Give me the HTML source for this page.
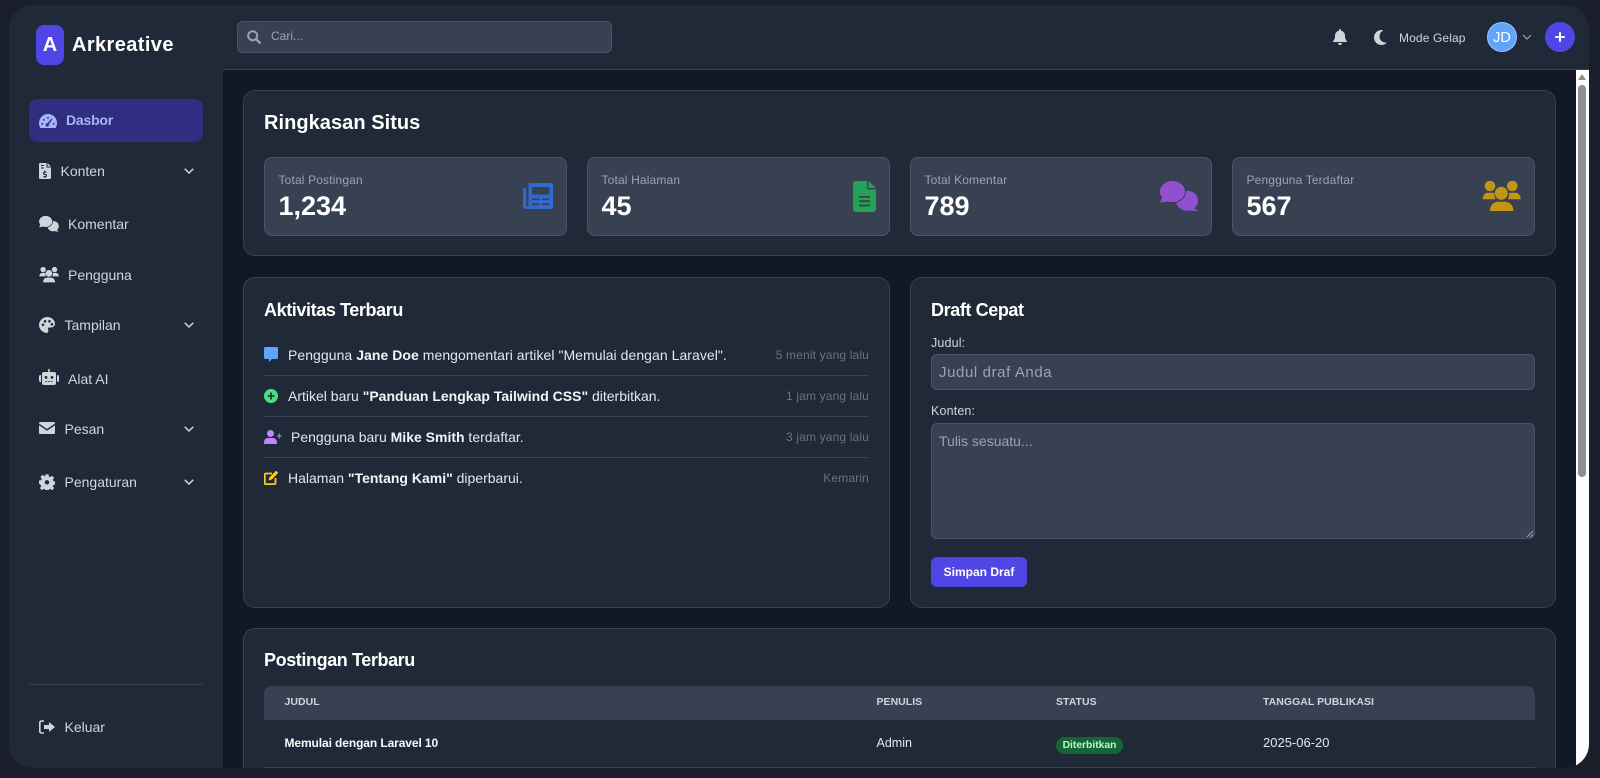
<!DOCTYPE html>
<html lang="id"><head><meta charset="utf-8"><title>Arkreative</title>
<style>
*{box-sizing:border-box;margin:0;padding:0}
html,body{width:1600px;height:778px;overflow:hidden;background:#1a1f2b;font-family:"Liberation Sans",sans-serif}
.a{position:absolute}
.t{position:absolute;white-space:nowrap;line-height:20px;height:20px}
#app{position:absolute;left:9px;top:5px;width:1580px;height:763px;border-radius:24px;overflow:hidden;background:#111827}
#in{position:absolute;left:-9px;top:-5px;width:1600px;height:778px}
.nav{color:#d1d5db;font-size:14px}
.card{position:absolute;background:#1f2937;border:1px solid #374151;border-radius:12px}
.stat{position:absolute;top:157px;height:79px;background:#374151;border:1px solid #4b5563;border-radius:8px}
.lab{color:#9ca3af;font-size:12px;letter-spacing:.15px}
.val{color:#fff;font-size:27px;font-weight:700;line-height:30px;height:30px}
.h2{color:#fff;font-size:18px;font-weight:700;letter-spacing:-.4px}
.act{color:#e5e7eb;font-size:14px}
.act b{color:#f3f4f6}
.time{color:#6b7280;font-size:12px;text-align:right;right:731px;letter-spacing:.15px}
.sep{position:absolute;left:264px;width:605px;height:1px;background:#374151}
.th{color:#d1d5db;font-size:10.5px;font-weight:700;letter-spacing:.03px}
.td{color:#e5e7eb;font-size:12.5px}
.fld{position:absolute;left:931px;width:604px;background:#374151;border:1px solid #4b5563;border-radius:6px}
svg{position:absolute;display:block}
</style></head><body>
<div id="app"><div id="in">
<!-- main -->
<div class="a" style="left:223px;top:69px;width:1353px;height:709px;background:#111827"></div>

<!-- summary -->
<div class="card" style="left:243px;top:90px;width:1313px;height:166px"></div>
<div class="t" style="left:264px;top:113px;color:#fff;font-size:20px;font-weight:700;letter-spacing:.05px">Ringkasan Situs</div>

<div class="stat" style="left:264px;width:303px"></div>
<div class="t lab" style="left:278.500px;top:170px">Total Postingan</div>
<div class="t val" style="left:278.500px;top:191px">1,234</div>
<svg style="left:523px;top:183px" width="30" height="26" viewBox="0 0 30 26"><path fill="#3069cf" fill-rule="evenodd" d="M5.500 0h22.500a2 2 0 0 1 2 2v22a2 2 0 0 1-2 2H3a3 3 0 0 1-3-3V5h3.200v17.500a.8.8 0 0 0 2.300 0zM9 4v7.500h17.500V4zM9 15.500v1.600h7.500v-1.600zM19 15.500v1.600h7.500v-1.600zM9 20.500v1.600h7.500v-1.600zM19 20.500v1.600h7.500v-1.600z"/></svg>

<div class="stat" style="left:587px;width:303px"></div>
<div class="t lab" style="left:601.500px;top:170px">Total Halaman</div>
<div class="t val" style="left:601.500px;top:191px">45</div>
<svg style="left:853px;top:181px" width="23" height="31" viewBox="0 0 23 31"><path fill="#25a255" fill-rule="evenodd" d="M3 0h11v6.500a2 2 0 0 0 2 2h7V28a3 3 0 0 1-3 3H3a3 3 0 0 1-3-3V3a3 3 0 0 1 3-3zM6 15v1.800h11V15zM6 19.300v1.800h11v-1.800zM6 23.600v1.800h11v-1.800z"/><path fill="#25a255" d="M15.500.3 23 7h-7.500z"/></svg>

<div class="stat" style="left:910px;width:302px"></div>
<div class="t lab" style="left:924.500px;top:170px">Total Komentar</div>
<div class="t val" style="left:924.500px;top:191px">789</div>
<svg style="left:1160px;top:181px" width="38" height="31" viewBox="0 0 38 31"><ellipse cx="27" cy="19.700" rx="11" ry="10" fill="#9050d0"/><path fill="#9050d0" d="M33 26l5 4c-3 0-6 0-8-1z"/><ellipse cx="12.500" cy="10.500" rx="13" ry="11" fill="#9050d0" stroke="#3b3850" stroke-width="1"/><ellipse cx="12.500" cy="10.500" rx="12.500" ry="10.500" fill="#9050d0"/><path fill="#9050d0" d="M3 15 0 21.500c3 0 6-.5 8-1.500z"/></svg>

<div class="stat" style="left:1232px;width:303px"></div>
<div class="t lab" style="left:1246.500px;top:170px">Pengguna Terdaftar</div>
<div class="t val" style="left:1246.500px;top:191px">567</div>
<svg style="left:1482px;top:181px" width="39" height="31" viewBox="0 0 39 31" fill="#c29515"><circle cx="8" cy="5" r="5.300"/><circle cx="30.300" cy="5" r="5.300"/><circle cx="19.300" cy="12.300" r="6.500"/><path d="M.7 18.300C.7 14 3 11.700 6 11.700h5c.5 0 1 .1 1.500.3-.5 1.500 0 4 1 6.300zM38.700 18.300C38.700 14 36.400 11.700 33.400 11.700h-5c-.5 0-1 .1-1.500.3.5 1.500 0 4-1 6.300zM8 30v-1c0-5 4-8.300 8-8.300h7c4 0 8.300 3.300 8.300 8.300v1z"/></svg>

<!-- activity -->
<div class="card" style="left:243px;top:277px;width:647px;height:331px"></div>
<div class="t h2" style="left:264px;top:300px">Aktivitas Terbaru</div>
<svg style="left:264px;top:347px" width="14" height="15" viewBox="0 0 14 15"><path fill="#60a5fa" d="M1.500 0h11A1.500 1.500 0 0 1 14 1.500v9a1.500 1.500 0 0 1-1.500 1.500H8l-3 3v-3H1.500A1.500 1.500 0 0 1 0 10.500v-9A1.500 1.500 0 0 1 1.500 0z"/></svg>
<div class="t act" style="left:288px;top:345px;letter-spacing:.05px">Pengguna <b>Jane Doe</b> mengomentari artikel "Memulai dengan Laravel".</div>
<div class="t time" style="top:345px">5 menit yang lalu</div>
<div class="sep" style="top:375px"></div>
<svg style="left:264px;top:389px" width="14" height="14" viewBox="0 0 14 14"><circle cx="7" cy="7" r="7" fill="#4ade80"/><path stroke="#1f2937" stroke-width="1.600" d="M7 3.500v7M3.500 7h7"/></svg>
<div class="t act" style="left:288px;top:386px">Artikel baru <b>"Panduan Lengkap Tailwind CSS"</b> diterbitkan.</div>
<div class="t time" style="top:386px">1 jam yang lalu</div>
<div class="sep" style="top:416px"></div>
<svg style="left:264px;top:430px" width="18" height="14" viewBox="0 0 18 14" fill="#c084fc"><circle cx="6.500" cy="3.500" r="3.500"/><path d="M0 14v-1.500C0 9.500 2 8 4 8h5c2 0 4 1.500 4 4.500V14z"/><path d="M14.800 3.500h1v2h2v1h-2v2h-1v-2h-2v-1h2z"/></svg>
<div class="t act" style="left:291px;top:427px">Pengguna baru <b>Mike Smith</b> terdaftar.</div>
<div class="t time" style="top:427px">3 jam yang lalu</div>
<div class="sep" style="top:457px"></div>
<svg style="left:264px;top:471px" width="14" height="14" viewBox="0 0 14 14"><path fill="none" stroke="#facc15" stroke-width="1.800" d="M8 2.500H1.800a1 1 0 0 0-1 1v8.700a1 1 0 0 0 1 1h8.700a1 1 0 0 0 1-1V7"/><path fill="#facc15" d="M11.500.300a1 1 0 0 1 1.400 0l.8.800a1 1 0 0 1 0 1.400L7.500 8.700 4.500 9.500l.8-3z"/></svg>
<div class="t act" style="left:288px;top:468px">Halaman <b>"Tentang Kami"</b> diperbarui.</div>
<div class="t time" style="top:468px">Kemarin</div>

<!-- draft -->
<div class="card" style="left:910px;top:277px;width:646px;height:331px"></div>
<div class="t h2" style="left:931px;top:300px">Draft Cepat</div>
<div class="t" style="left:931px;top:333px;color:#d1d5db;font-size:12.500px;letter-spacing:.15px">Judul:</div>
<div class="fld" style="top:354px;height:36px"></div>
<div class="t" style="left:939px;top:362.500px;color:#9ca3af;font-size:15px;letter-spacing:.6px">Judul draf Anda</div>
<div class="t" style="left:931px;top:401px;color:#d1d5db;font-size:12.500px;letter-spacing:.15px">Konten:</div>
<div class="fld" style="top:423px;height:116px"></div>
<div class="t" style="left:939px;top:431px;color:#9ca3af;font-size:14px">Tulis sesuatu...</div>
<svg style="left:1526px;top:530px" width="8" height="8" viewBox="0 0 8 8"><path stroke="#9ca3af" d="M1 7 7 1M4.500 7 7 4.500"/></svg>
<div class="a" style="left:931px;top:557px;width:96px;height:30px;background:#4f46e5;border-radius:6px;color:#fff;font-size:12px;font-weight:700;line-height:30px;text-align:center">Simpan Draf</div>

<!-- table -->
<div class="card" style="left:243px;top:628px;width:1313px;height:170px"></div>
<div class="t h2" style="left:264px;top:650px">Postingan Terbaru</div>
<div class="a" style="left:264px;top:686px;width:1271px;height:34px;background:#374151;border-radius:8px 8px 0 0"></div>
<div class="t th" style="left:284.500px;top:692px">JUDUL</div>
<div class="t th" style="left:876.500px;top:692px">PENULIS</div>
<div class="t th" style="left:1056px;top:692px">STATUS</div>
<div class="t th" style="left:1263px;top:692px">TANGGAL PUBLIKASI</div>
<div class="t td" style="left:284.500px;top:733px;font-weight:700;font-size:12px;letter-spacing:-.1px;color:#f9fafb">Memulai dengan Laravel 10</div>
<div class="t td" style="left:876.500px;top:733px">Admin</div>
<div class="a" style="left:1056px;top:737px;width:67px;height:17px;border-radius:9px;background:#166534;color:#bbf7d0;font-size:10.300px;font-weight:700;line-height:17px;text-align:center">Diterbitkan</div>
<div class="t td" style="left:1263px;top:733px;font-size:13px">2025-06-20</div>
<div class="sep" style="left:264px;width:1271px;top:767px"></div>

<!-- scrollbar -->
<div class="a" style="left:1576px;top:69px;width:13px;height:709px;background:#fdfdfd"></div>
<svg style="left:1578px;top:74px" width="8" height="6" viewBox="0 0 8 6"><path fill="#8f8f8f" d="M4 0l4 6H0z"/></svg>
<div class="a" style="left:1578px;top:85px;width:8px;height:392px;border-radius:4px;background:#8f8f8f"></div>

<!-- header -->
<div class="a" style="left:223px;top:0;width:1377px;height:70px;background:#1f2937;border-bottom:1px solid #374151"></div>
<div class="a" style="left:237px;top:21px;width:375px;height:32px;background:#374151;border:1px solid #4b5563;border-radius:6px"></div>
<svg style="left:247px;top:30px" width="14" height="14" viewBox="0 0 14 14"><circle cx="5.700" cy="5.700" r="4.500" fill="none" stroke="#9ca3af" stroke-width="2"/><path stroke="#9ca3af" stroke-width="2.400" stroke-linecap="round" d="M9.300 9.300l3.500 3.500"/></svg>
<div class="t" style="left:271px;top:26px;color:#9ca3af;font-size:12px">Cari...</div>
<svg style="left:1333px;top:29px" width="14" height="16" viewBox="0 0 14 16"><path fill="#d1d5db" d="M7 0a1 1 0 0 1 1 1v.800c2.500.500 4 2.500 4 5 0 3 .800 4.200 2 5.400V13H0v-.800C1.200 11 2 9.800 2 6.800c0-2.500 1.500-4.500 4-5V1a1 1 0 0 1 1-1zM5 14h4a2 2 0 0 1-4 0z"/></svg>
<svg style="left:1374px;top:30px" width="13" height="15" viewBox="0 0 13 15"><path fill="#d1d5db" d="M7.500 0C3.400 0 0 3.300 0 7.500S3.400 15 7.500 15c2.200 0 4.200-1 5.500-2.500-4 .600-7.500-2-7.500-6 0-2.600 1.400-4.800 3.600-5.900C8.600.200 8 0 7.500 0z"/></svg>
<div class="t" style="left:1399px;top:28px;color:#d1d5db;font-size:12px;letter-spacing:.12px">Mode Gelap</div>
<div class="a" style="left:1487px;top:22px;width:30px;height:30px;border-radius:50%;background:#60a5fa;border:1px solid #93c5fd;color:#fff;font-size:14.500px;line-height:30px;text-align:center">JD</div>
<svg style="left:1522px;top:34px" width="10" height="6" viewBox="0 0 10 6"><path fill="none" stroke="#9ca3af" stroke-width="1.200" d="M1 1l4 4 4-4"/></svg>
<div class="a" style="left:1545px;top:22px;width:30px;height:30px;border-radius:50%;background:#4f46e5"></div>
<svg style="left:1555px;top:32px" width="10" height="10" viewBox="0 0 10 10"><path stroke="#fff" stroke-width="2" stroke-linecap="round" d="M5 1v8M1 5h8"/></svg>

<!-- sidebar -->
<div class="a" style="left:0;top:0;width:223px;height:778px;background:#1f2937"></div>
<div class="a" style="left:36px;top:25px;width:28px;height:40px;border-radius:8px;background:#4f46e5;color:#fff;font-size:20px;font-weight:700;line-height:40px;text-align:center">A</div>
<div class="t" style="left:72px;top:35px;color:#fff;font-size:20px;font-weight:700;letter-spacing:.4px">Arkreative</div>

<div class="a" style="left:29px;top:99px;width:174px;height:43px;border-radius:8px;background:#312e81"></div>
<svg style="left:39px;top:114px" width="18" height="14" viewBox="0 0 18 14"><path fill="#a5b4fc" fill-rule="evenodd" d="M9 0a9 9 0 0 1 9 9c0 2-.600 3.700-1.500 5H1.500C.600 12.700 0 11 0 9a9 9 0 0 1 9-9zM8.200 3v1.600h1.600V3zM4 5v1.600h1.600V5zM2.500 9v1.600h1.600V9zM13.900 9v1.600h1.600V9zM12.500 4.500 8.500 9.300a1.700 1.700 0 1 0 1.300 1L13.500 5.200z"/></svg>
<div class="t" style="left:66px;top:110px;color:#a5b4fc;font-size:14px;font-weight:700;letter-spacing:-.2px">Dasbor</div>

<svg style="left:39px;top:163px" width="12" height="16" viewBox="0 0 12 16"><path fill="#d1d5db" fill-rule="evenodd" d="M1 0h6.500v4.500H12V15a1 1 0 0 1-1 1H1a1 1 0 0 1-1-1V1a1 1 0 0 1 1-1zM2 2v1h3V2zM2 4.500v1h3v-1zM5.500 7.500v1C4.300 8.700 4 9.500 4 10.200c0 2 3 1.500 3 2.500 0 .500-1.500.500-2.500 0V14l1 .200v.800h1v-.800c1.200-.200 1.500-1 1.500-1.700 0-2-3-1.500-3-2.500 0-.500 1.300-.500 2.300-.100V8.700l-.8-.2v-1z"/><path fill="#d1d5db" d="M8.500 0 12 3.500H8.500z"/></svg>
<div class="t nav" style="left:60.500px;top:161px">Konten</div>
<svg class="chev" style="left:184px;top:168px" width="10" height="6" viewBox="0 0 10 6"><path fill="none" stroke="#d1d5db" stroke-width="1.500" d="M.8.800 5 5 9.200.8"/></svg>

<svg style="left:39px;top:216px" width="20" height="16" viewBox="0 0 38 31"><ellipse cx="27" cy="19.700" rx="11" ry="10" fill="#d1d5db"/><path fill="#d1d5db" d="M33 26l5 4c-3 0-6 0-8-1z"/><ellipse cx="12.500" cy="10.500" rx="13.300" ry="11.300" fill="#d1d5db" stroke="#1f2937" stroke-width="1.400"/><ellipse cx="12.500" cy="10.500" rx="12.500" ry="10.500" fill="#d1d5db"/><path fill="#d1d5db" d="M3 15 0 21.500c3 0 6-.5 8-1.500z"/></svg>
<div class="t nav" style="left:68px;top:214px">Komentar</div>

<svg style="left:39px;top:267px" width="20" height="16" viewBox="0 0 39 31" fill="#d1d5db"><circle cx="8" cy="5" r="5.300"/><circle cx="30.300" cy="5" r="5.300"/><circle cx="19.300" cy="12.300" r="6.500"/><path d="M.7 18.300C.7 14 3 11.700 6 11.700h5c.5 0 1 .1 1.500.3-.5 1.500 0 4 1 6.300zM38.700 18.300C38.700 14 36.400 11.700 33.400 11.700h-5c-.5 0-1 .1-1.500.3.5 1.500 0 4-1 6.300zM8 30v-1c0-5 4-8.300 8-8.300h7c4 0 8.300 3.300 8.300 8.300v1z"/></svg>
<div class="t nav" style="left:68px;top:265px">Pengguna</div>

<svg style="left:39px;top:317px" width="16" height="16" viewBox="0 0 16 16"><path fill="#d1d5db" fill-rule="evenodd" d="M8 0c4.400 0 8 3 8 6.800 0 2.500-2 3.700-4 3.700h-2c-1 0-1.500 1-1 1.700.6.800.6 2-.2 3-.3.500-.6.800-1.300.8C3.400 15.500 0 12 0 8s3.600-8 8-8zM4 6.500a1.300 1.300 0 1 0 0 2.600 1.300 1.300 0 0 0 0-2.600zM6 3a1.300 1.300 0 1 0 0 2.600A1.300 1.300 0 0 0 6 3zM10.500 3a1.300 1.300 0 1 0 0 2.600 1.300 1.300 0 0 0 0-2.600zM13 6a1.300 1.300 0 1 0 0 2.600A1.300 1.300 0 0 0 13 6z"/></svg>
<div class="t nav" style="left:64.500px;top:315px">Tampilan</div>
<svg class="chev" style="left:184px;top:322px" width="10" height="6" viewBox="0 0 10 6"><path fill="none" stroke="#d1d5db" stroke-width="1.500" d="M.8.800 5 5 9.200.8"/></svg>

<svg style="left:39px;top:369px" width="20" height="16" viewBox="0 0 20 16"><path fill="#d1d5db" fill-rule="evenodd" d="M9.200 0h1.600v3H15a2 2 0 0 1 2 2v9a2 2 0 0 1-2 2H5a2 2 0 0 1-2-2V5a2 2 0 0 1 2-2h4.200zM7 7a1.400 1.400 0 1 0 0 2.800A1.400 1.400 0 0 0 7 7zm6 0a1.400 1.400 0 1 0 0 2.800A1.400 1.400 0 0 0 13 7zM6.500 12v1h1.500v-1zm2.800 0v1h1.500v-1zm2.800 0v1h1.500v-1zM0 7.500A1.500 1.500 0 0 1 1.500 6H2v7h-.5A1.500 1.500 0 0 1 0 11.500zM20 7.500A1.500 1.500 0 0 0 18.500 6H18v7h.5a1.500 1.500 0 0 0 1.500-1.500z"/></svg>
<div class="t nav" style="left:68px;top:369px">Alat AI</div>

<svg style="left:39px;top:422px" width="16" height="12" viewBox="0 0 16 12" fill="#d1d5db"><path d="M1 0h14a1 1 0 0 1 1 1v.500L8 7 0 1.500V1a1 1 0 0 1 1-1z"/><path d="M0 3.300V11a1 1 0 0 0 1 1h14a1 1 0 0 0 1-1V3.300L8 8.800z"/></svg>
<div class="t nav" style="left:64.500px;top:419px">Pesan</div>
<svg class="chev" style="left:184px;top:426px" width="10" height="6" viewBox="0 0 10 6"><path fill="none" stroke="#d1d5db" stroke-width="1.500" d="M.8.800 5 5 9.200.8"/></svg>

<svg style="left:39px;top:474px" width="16" height="16" viewBox="0 0 16 16"><path fill="#d1d5db" fill-rule="evenodd" d="M6.500 0h3l.4 2.200 1.300.6 1.900-1.300 2 2.100-1.300 1.800.6 1.400 2.100.4v3l-2.100.4-.6 1.400 1.300 1.800-2 2.100-1.900-1.300-1.300.6-.4 2.200h-3l-.4-2.200-1.300-.6-1.900 1.300-2-2.100 1.300-1.800-.6-1.400L0 9.200v-3l2.100-.4.6-1.400-1.300-1.800 2-2.100 1.900 1.300 1.300-.6zM8 5.800a2.200 2.200 0 1 0 0 4.400 2.200 2.200 0 0 0 0-4.400z" transform="translate(0 .3)"/></svg>
<div class="t nav" style="left:64.500px;top:472px">Pengaturan</div>
<svg class="chev" style="left:184px;top:479px" width="10" height="6" viewBox="0 0 10 6"><path fill="none" stroke="#d1d5db" stroke-width="1.500" d="M.8.800 5 5 9.200.8"/></svg>

<div class="a" style="left:29px;top:684px;width:174px;height:1px;background:#374151"></div>
<svg style="left:39px;top:720px" width="16" height="14" viewBox="0 0 16 14" fill="#d1d5db"><path fill="none" stroke="#d1d5db" stroke-width="1.600" d="M5 1H2.500A1.700 1.700 0 0 0 .8 2.700v8.600A1.700 1.700 0 0 0 2.500 13H5"/><path d="M10 2l6 5-6 5V9H5V5h5z"/></svg>
<div class="t nav" style="left:64.500px;top:717px">Keluar</div>
</div></div>
</body></html>
